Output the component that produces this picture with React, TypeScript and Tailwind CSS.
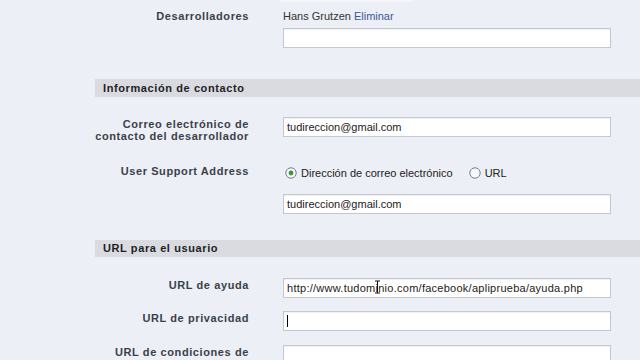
import type { ReactNode } from 'react';

const FONT = { fontFamily: '"Liberation Sans", Arial, sans-serif' };

function Field({ children, cursor, wide }: { children?: ReactNode; cursor?: boolean; wide?: boolean }) {
  return (
    <div
      className={`relative w-[328px] h-[20px] bg-white border border-[#c3c8d0] shadow-[inset_0_1px_1px_rgba(0,0,0,0.06)] flex items-center px-[3px] text-[11px] text-[#222] ${
        wide ? 'tracking-[0.26px]' : ''
      }`}
    >
      {cursor && <span className="w-px h-[12px] bg-black" />}
      {children}
    </div>
  );
}

function Row({ label, children, className = '' }: { label: ReactNode; children: ReactNode; className?: string }) {
  return (
    <div className={`flex items-start ${className}`}>
      <div className="w-[154px] text-right font-bold text-[11px] leading-[14px] tracking-[0.6px] text-[#3b3f4a] whitespace-nowrap">
        {label}
      </div>
      <div className="ml-[34px] flex flex-col">{children}</div>
    </div>
  );
}

function Section({ title, className = '' }: { title: string; className?: string }) {
  return (
    <div className={`bg-[#d9dbe0] flex items-center pl-[8px] font-bold text-[11px] tracking-[0.6px] text-[#1e1e24] ${className}`}>
      {title}
    </div>
  );
}

function Radio({ checked }: { checked?: boolean }) {
  return (
    <svg width="12" height="12" viewBox="0 0 12 12">
      <circle cx="6" cy="6" r="5.2" fill="#fafafa" stroke="#6d7f94" strokeWidth="1" />
      {checked && <circle cx="6" cy="6" r="2.4" fill="#3c9a3c" />}
    </svg>
  );
}

export default function App() {
  return (
    <div className="w-[640px] h-[360px] overflow-hidden bg-[#eceff5] pl-[95px]" style={FONT}>
      <div className="ml-[185px] w-[133px] h-[2px] bg-[#f4f6fa]" />

      <Row label="Desarrolladores" className="mt-[7px]">
        <div className="text-[11px] leading-[14px] text-[#333]">
          Hans Grutzen <span className="text-[#3b5998]">Eliminar</span>
        </div>
        <div className="mt-[5px]">
          <Field />
        </div>
      </Row>

      <Section title="Información de contacto" className="mt-[31px] h-[18px]" />

      <Row
        className="mt-[20px]"
        label={
          <div className="leading-[12px] pt-[1px]">
            Correo electrónico de
            <br />
            contacto del desarrollador
          </div>
        }
      >
        <Field>tudireccion@gmail.com</Field>
      </Row>

      <Row label="User Support Address" className="mt-[22px]">
        <div className="h-[16px] mt-[1px] flex items-center text-[11px] text-[#222]">
          <span className="ml-[2px]"><Radio checked /></span>
          <span className="ml-[4px]">Dirección de correo electrónico</span>
          <span className="ml-[16px]"><Radio /></span>
          <span className="ml-[4px]">URL</span>
        </div>
        <div className="mt-[13px]">
          <Field>tudireccion@gmail.com</Field>
        </div>
      </Row>

      <Section title="URL para el usuario" className="mt-[26px] h-[17px]" />

      <Row label="URL de ayuda" className="mt-[21px]">
        <Field wide>
          http://www.tudominio.com/facebook/apliprueba/ayuda.php
          <svg className="absolute left-[90px] top-[1px]" width="7" height="14" viewBox="0 0 7 14">
            <path d="M1 1h5M3.5 1v12M1 13h5" stroke="#111" strokeWidth="1" fill="none" />
          </svg>
        </Field>
      </Row>

      <Row label="URL de privacidad" className="mt-[13px]">
        <Field cursor />
      </Row>

      <Row label="URL de condiciones de" className="mt-[14px]">
        <Field />
      </Row>
    </div>
  );
}
